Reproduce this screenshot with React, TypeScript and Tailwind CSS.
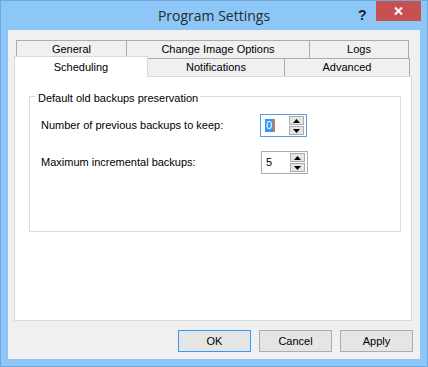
import React from 'react';

const ui = { fontFamily: '"Liberation Sans", Arial, sans-serif' };

const SpinBox: React.FC<{ value: string; focused?: boolean }> = ({ value, focused }) => (
  <div
    className={`flex h-[23px] w-[47px] items-stretch border bg-white ${
      focused ? 'border-[#569de5]' : 'border-[#ababab]'
    }`}
  >
    <div className="flex flex-1 items-center pl-[4px] text-[11px] text-black">
      {focused ? (
        <>
          <span className="bg-[#3399ff] px-[1px] leading-[13px] text-white">{value}</span>
          <span className="h-[13px] w-[2px] bg-[#d07a2a]" />
        </>
      ) : (
        <span>{value}</span>
      )}
    </div>
    <div className="flex w-[17px] flex-col justify-center gap-px pr-px">
      <button className="flex h-[9px] w-[15px] items-center justify-center border border-[#acacac] bg-[#e5e5e5]">
        <svg width="7" height="4" viewBox="0 0 7 4">
          <path d="M3.5 0 L7 4 L0 4 Z" fill="#000" />
        </svg>
      </button>
      <button className="flex h-[9px] w-[15px] items-center justify-center border border-[#acacac] bg-[#e5e5e5]">
        <svg width="7" height="4" viewBox="0 0 7 4">
          <path d="M0 0 L7 0 L3.5 4 Z" fill="#000" />
        </svg>
      </button>
    </div>
  </div>
);

const DialogButton: React.FC<{ label: string; primary?: boolean }> = ({ label, primary }) => (
  <button
    className={`h-[22px] w-[73px] border bg-[#e5e5e5] text-[11px] text-black ${
      primary ? 'border-[#3399ff]' : 'border-[#acacac]'
    }`}
  >
    {label}
  </button>
);

const App: React.FC = () => {
  return (
    <div
      className="flex h-[367px] w-[428px] flex-col border border-[#6ea8dc] bg-[#8cc7f7]"
      style={ui}
    >
      {/* title bar */}
      <div className="relative flex h-[29px] items-center justify-center">
        <span
          className="text-[14px] text-[#2b2b2b]"
          style={{ fontFamily: '"Open Sans", "Noto Sans", sans-serif' }}
        >
          Program Settings
        </span>
        <span className="absolute left-[357px] top-[4px] text-[14px] font-bold text-[#222]">?</span>
        <button className="absolute left-[375px] top-0 flex h-[20px] w-[45px] items-center justify-center bg-[#c75050]">
          <svg width="9" height="8" viewBox="0 0 9 8">
            <path d="M1 0.5 L8 7.5 M8 0.5 L1 7.5" stroke="#fff" strokeWidth="2" />
          </svg>
        </button>
      </div>

      {/* client area */}
      <div className="mx-[7px] flex h-[329px] flex-col bg-[#f0f0f0]">
        <div className="pl-[6px] pt-[10px]">
          {/* tab row 1 */}
          <div className="ml-[2px] flex h-[18px] text-[11px] text-black">
            <div className="flex w-[110px] items-center justify-center border-l border-t border-[#acacac] bg-[#f0f0f0]">
              General
            </div>
            <div className="flex w-[183px] items-center justify-center border-l border-t border-[#acacac] bg-[#f0f0f0]">
              Change Image Options
            </div>
            <div className="flex w-[100px] items-center justify-center border-l border-r border-t border-[#acacac] bg-[#f0f0f0]">
              Logs
            </div>
          </div>
          {/* tab row 2 */}
          <div className="flex h-[18px] items-start text-[11px] text-black">
            <div className="relative z-10 -mt-[2px] flex h-[21px] w-[134px] items-start justify-center border-l border-r border-t border-[#d9d9d9] bg-white pt-[2px]">
              Scheduling
            </div>
            <div className="flex h-[18px] w-[137px] items-center justify-center border-r border-t border-[#acacac] bg-[#f0f0f0]">
              Notifications
            </div>
            <div className="flex h-[18px] w-[125px] items-center justify-center border-r border-t border-[#acacac] bg-[#f0f0f0]">
              Advanced
            </div>
          </div>
          {/* panel */}
          <div className="h-[245px] w-[398px] border border-[#d9d9d9] bg-white pt-[19px]">
            <div className="relative ml-[14px] h-[136px] w-[372px] border border-[#dcdcdc] text-[11px] text-black">
              <span className="absolute -top-[7px] left-[6px] bg-white px-[2px]">
                Default old backups preservation
              </span>
              <div className="flex flex-col gap-[14px] pl-[11px] pt-[17px]">
                <div className="flex items-center">
                  <span className="w-[219px]">Number of previous backups to keep:</span>
                  <SpinBox value="0" focused />
                </div>
                <div className="flex items-center">
                  <span className="w-[220px]">Maximum incremental backups:</span>
                  <SpinBox value="5" />
                </div>
              </div>
            </div>
          </div>
        </div>
        {/* buttons */}
        <div className="mt-[9px] flex justify-end gap-[8px] pr-[7px]">
          <DialogButton label="OK" primary />
          <DialogButton label="Cancel" />
          <DialogButton label="Apply" />
        </div>
      </div>
    </div>
  );
};

export default App;
